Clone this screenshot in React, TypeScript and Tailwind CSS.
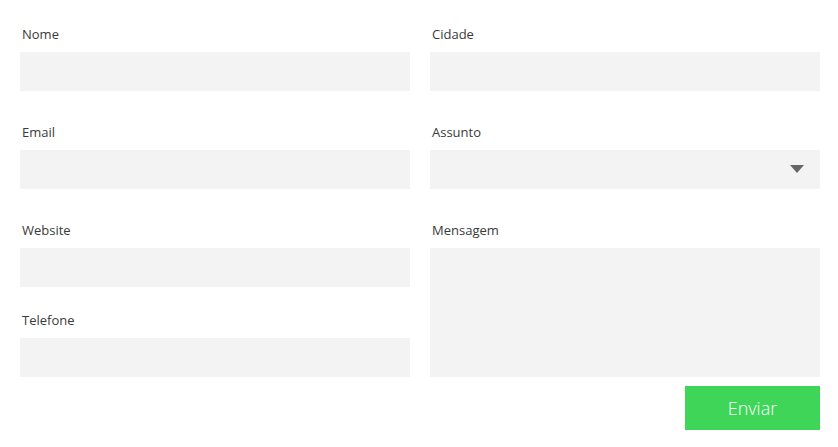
import React from "react";

const font = { fontFamily: '"Open Sans", sans-serif' };

function Label({ children }: { children: React.ReactNode }) {
  return (
    <label className="block h-[18px] pl-[2px] mb-[9px] text-[13px] leading-[18px] text-[#3a3a3a]">
      {children}
    </label>
  );
}

const inputCls = "block w-full h-[39px] bg-[#f3f3f3] border-0 outline-none px-3 text-[13px] text-[#333]";

export default function App() {
  return (
    <div className="w-[838px] h-[447px] bg-white" style={font}>
      <form className="w-[800px] ml-[20px] pt-[25px]">
        <div className="grid grid-cols-[390px_390px] gap-x-[20px]">
          <div className="flex flex-col">
            <Label>Nome</Label>
            <input className={inputCls} />
            <div className="mt-[32px]">
              <Label>Email</Label>
              <input className={inputCls} />
            </div>
            <div className="mt-[32px]">
              <Label>Website</Label>
              <input className={inputCls} />
            </div>
            <div className="mt-[24px]">
              <Label>Telefone</Label>
              <input className={inputCls} />
            </div>
          </div>
          <div className="flex flex-col">
            <Label>Cidade</Label>
            <input className={inputCls} />
            <div className="mt-[32px]">
              <Label>Assunto</Label>
              <div className="relative">
                <select className={inputCls + " appearance-none"} defaultValue="">
                  <option value=""></option>
                </select>
                <svg
                  className="absolute right-[16px] top-[15px]"
                  width="14"
                  height="8"
                  viewBox="0 0 14 8"
                >
                  <path d="M0 0 H14 L7 8 Z" fill="#666" />
                </svg>
              </div>
            </div>
            <div className="mt-[32px]">
              <Label>Mensagem</Label>
              <textarea className="block w-full h-[129px] bg-[#f3f3f3] border-0 outline-none resize-none p-3 text-[13px]" />
            </div>
          </div>
        </div>
        <div className="flex justify-end mt-[9px]">
          <button
            type="button"
            className="w-[135px] h-[44px] bg-[#3fd559] text-white text-[18px] font-light"
          >
            Enviar
          </button>
        </div>
      </form>
    </div>
  );
}
